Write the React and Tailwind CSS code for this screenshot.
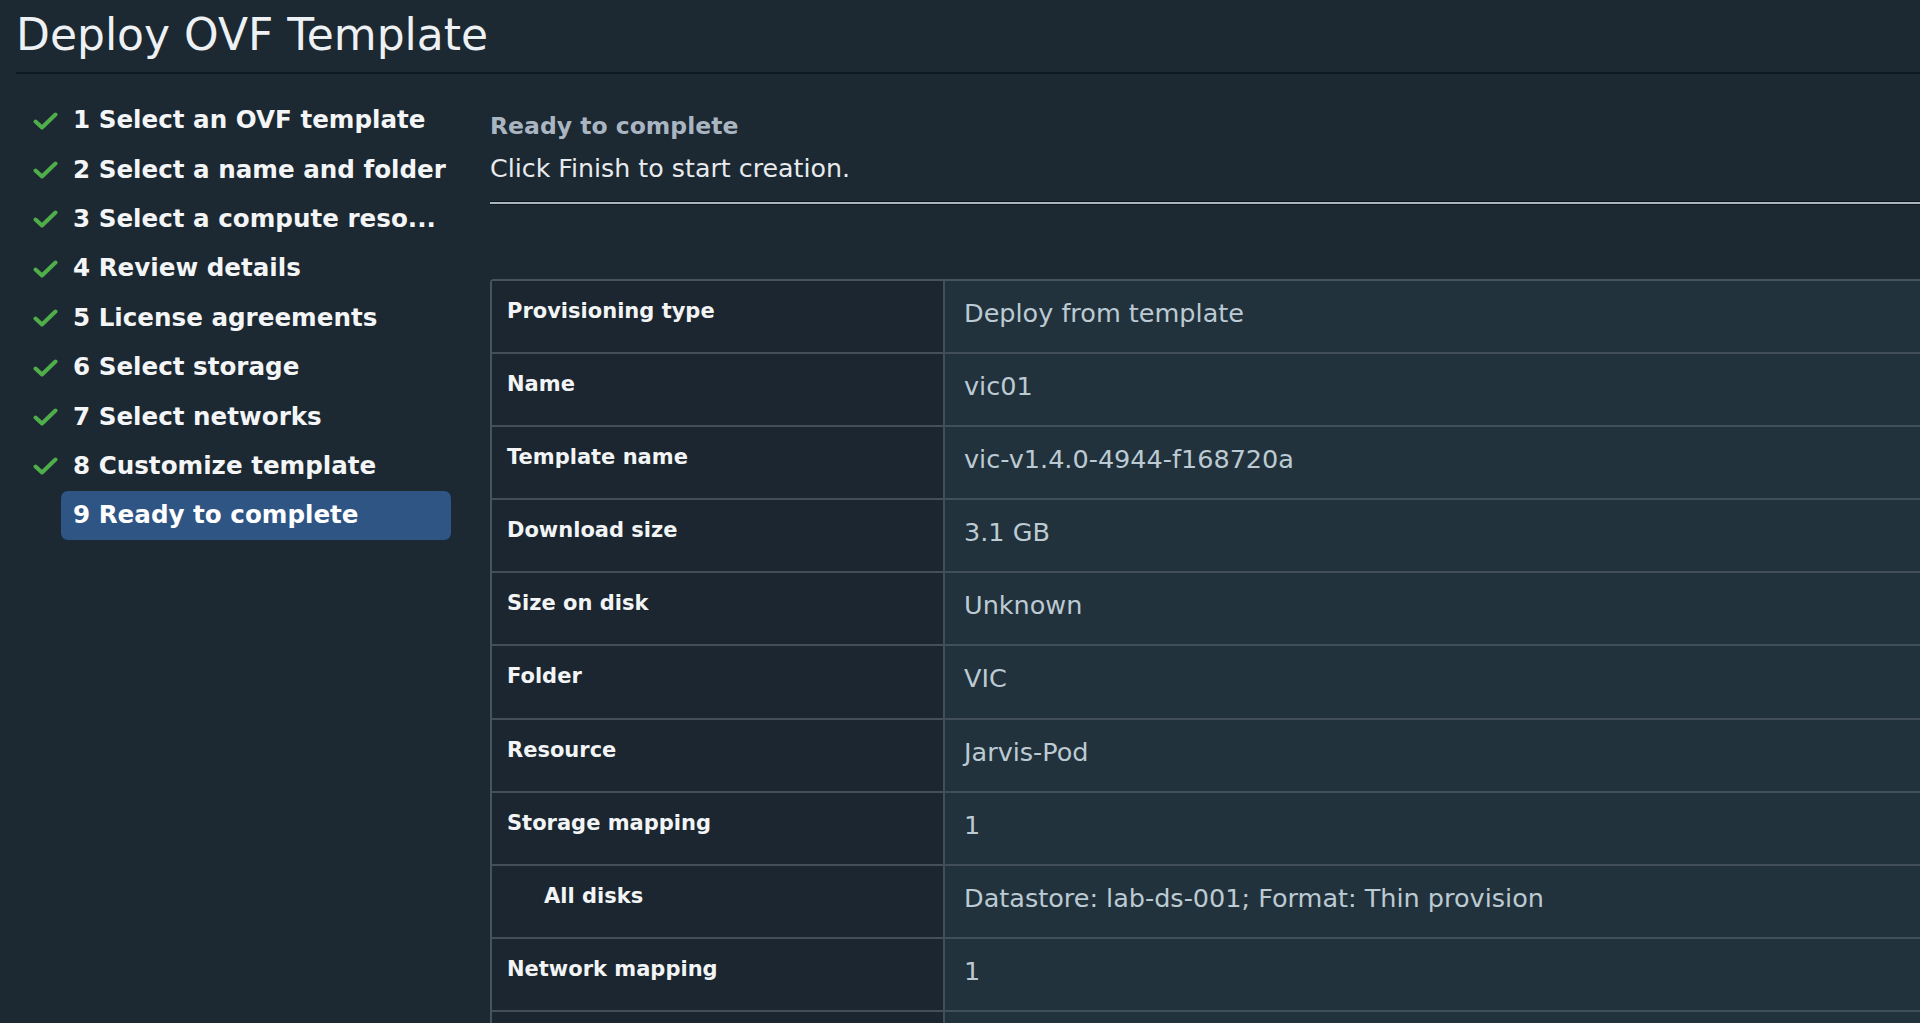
import React from "react";

const steps = [
  "1 Select an OVF template",
  "2 Select a name and folder",
  "3 Select a compute reso...",
  "4 Review details",
  "5 License agreements",
  "6 Select storage",
  "7 Select networks",
  "8 Customize template",
  "9 Ready to complete",
];

const rows = [
  { label: "Provisioning type", value: "Deploy from template" },
  { label: "Name", value: "vic01" },
  { label: "Template name", value: "vic-v1.4.0-4944-f168720a" },
  { label: "Download size", value: "3.1 GB" },
  { label: "Size on disk", value: "Unknown" },
  { label: "Folder", value: "VIC" },
  { label: "Resource", value: "Jarvis-Pod" },
  { label: "Storage mapping", value: "1" },
  { label: "All disks", value: "Datastore: lab-ds-001; Format: Thin provision", sub: true },
  { label: "Network mapping", value: "1" },
  // row cut off by the bottom of the window
  { label: "", value: "", sub: true },
];

const Check = () => (
  <svg width="25" height="20" viewBox="0 0 25 20" fill="none">
    <path d="M2.5 10.5 L9 16.5 L22.5 3.5" stroke="#4fae4a" strokeWidth="4" strokeLinecap="round" strokeLinejoin="round" />
  </svg>
);

const App = () => {
  const current = steps.length - 1;

  return (
    <div className="h-screen bg-[#1c2832] text-white font-['DejaVu_Sans',sans-serif] overflow-hidden">
      {/* Header */}
      <div className="ml-[16px] h-[74px] pt-[13px] border-b-2 border-[#0e1820]">
        <h1 className="text-[44px] leading-[44px] text-[#eef1f3]">Deploy OVF Template</h1>
      </div>

      <div className="flex">
        {/* Steps */}
        <ul className="w-[474px] shrink-0 pl-[33px] pt-[22px]">
          {steps.map((step, i) => (
            <li key={step} className="flex items-center h-[49.4px]">
              <div className="w-[28px] flex items-center">{i < current && <Check />}</div>
              <div
                className={
                  "w-[390px] h-[49px] flex items-center px-[12px] rounded-[7px] text-[24.6px] font-bold whitespace-nowrap " +
                  (i === current ? "bg-[#2e5584] text-white" : "text-[#f3f5f6]")
                }
              >
                {step}
              </div>
            </li>
          ))}
        </ul>

        {/* Content */}
        <div className="flex-1 pl-[16px] pt-[38px]">
          <div className="text-[23.5px] leading-[28px] font-bold text-[#a9b6c2]">Ready to complete</div>
          <div className="mt-[14px] text-[25.3px] leading-[30px] text-[#e7ebee]">Click Finish to start creation.</div>
          <div className="mt-[17px] h-[4px] border-y border-[#0d1720] bg-[#a9b4bc]" />

          <div className="mt-[74px] border-l-2 border-t-2 border-[#46545e] rounded-tl-[4px]">
            {rows.map((row, i) => (
              <div key={i} className="grid grid-cols-[453px_1fr] h-[73.1px] border-b-2 border-[#424f59]">
                <div
                  className={
                    "bg-[#1b2630] border-r-2 border-[#424f59] pt-[18px] text-[21px] leading-[24px] font-bold text-[#f2f4f5] " +
                    (row.sub ? "pl-[52px]" : "pl-[15px]")
                  }
                >
                  {row.label}
                </div>
                <div className="bg-[#22323c] pl-[19px] pt-[17px] text-[25.5px] leading-[30px] text-[#bccad3]">
                  {row.value}
                </div>
              </div>
            ))}
          </div>
        </div>
      </div>
    </div>
  );
};

export default App;
